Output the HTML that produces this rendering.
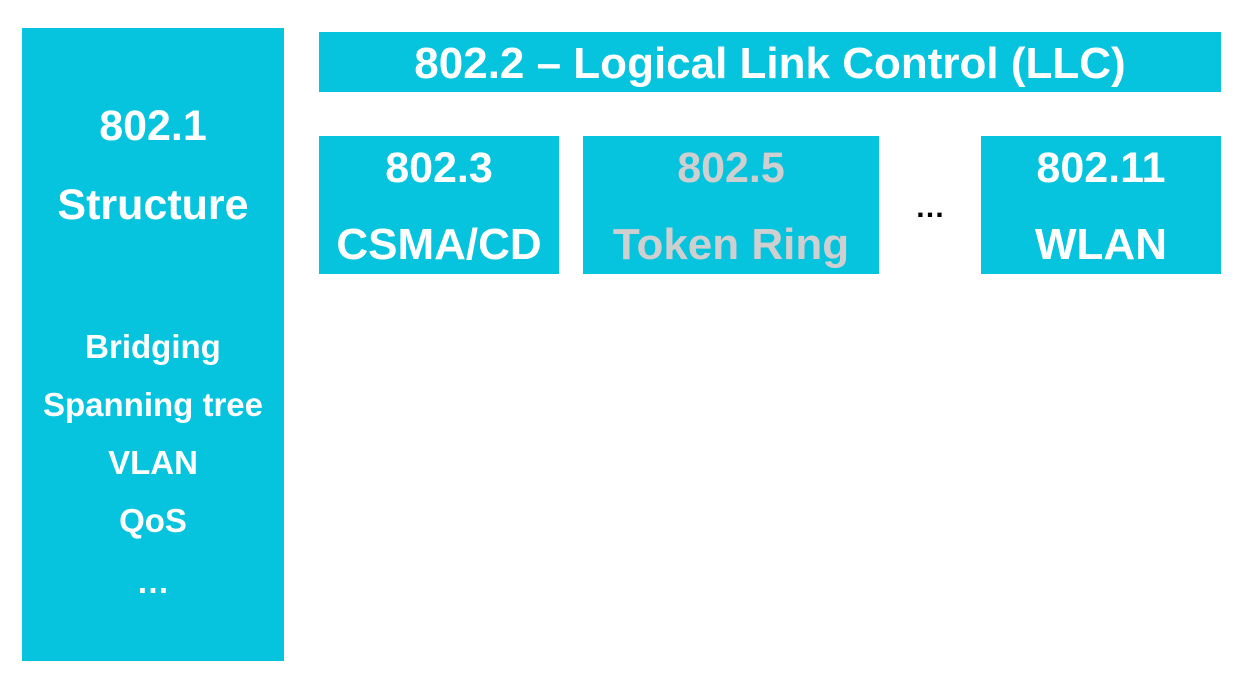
<!DOCTYPE html>
<html><head><style>
body{margin:0;width:1250px;height:686px;background:#fff;font-family:"Liberation Sans",sans-serif;font-weight:bold;color:#fff;position:relative;overflow:hidden}
.b{position:absolute;background:#06c3de;text-align:center}
.t{position:absolute;left:0;right:0;text-align:center;white-space:nowrap}
</style></head><body>
<div class="b" style="left:22px;top:28px;width:262px;height:633px">
 <div class="t" style="top:74px;font-size:43px">802.1</div>
 <div class="t" style="top:153px;font-size:43px">Structure</div>
 <div class="t" style="top:300px;font-size:33px">Bridging</div>
 <div class="t" style="top:358px;font-size:33px">Spanning tree</div>
 <div class="t" style="top:416px;font-size:33px">VLAN</div>
 <div class="t" style="top:474px;font-size:33px">QoS</div>
 <div class="t" style="top:535px;font-size:33px">…</div>
</div>
<div class="b" style="left:319px;top:32px;width:902px;height:60px">
 <div class="t" style="top:7px;font-size:44px">802.2 – Logical Link Control (LLC)</div>
</div>
<div class="b" style="left:319px;top:136px;width:240px;height:138px">
 <div class="t" style="top:8px;font-size:43px">802.3</div>
 <div class="t" style="top:84px;font-size:44px">CSMA/CD</div>
</div>
<div class="b" style="left:583px;top:136px;width:296px;height:138px;color:#cfcfcf">
 <div class="t" style="top:8px;font-size:43px">802.5</div>
 <div class="t" style="top:84px;font-size:44px">Token Ring</div>
</div>
<div style="position:absolute;left:900px;width:60px;top:191px;text-align:center;color:#000;font-size:30px">…</div>
<div class="b" style="left:981px;top:136px;width:240px;height:138px">
 <div class="t" style="top:8px;font-size:43px">802.11</div>
 <div class="t" style="top:84px;font-size:44px">WLAN</div>
</div>
</body></html>
